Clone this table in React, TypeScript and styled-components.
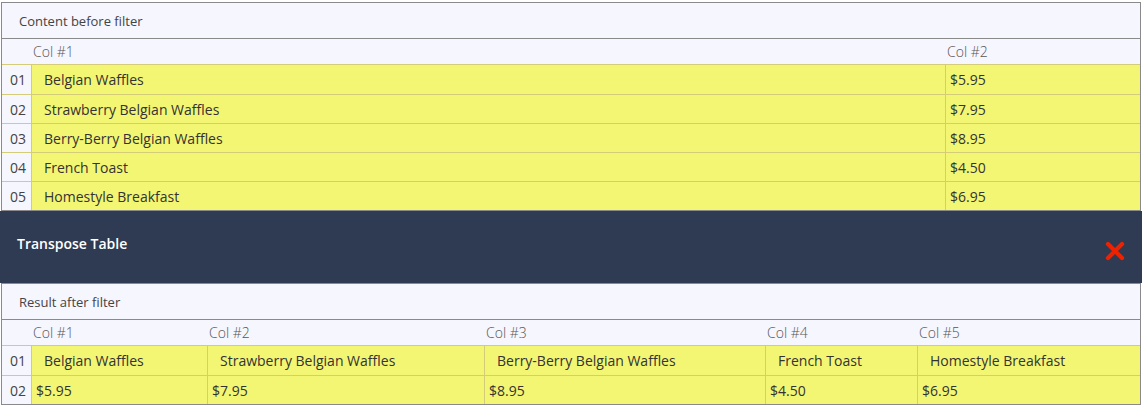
import React from "react";
import styled, { createGlobalStyle } from "styled-components";

const Global = createGlobalStyle`
  html, body { margin: 0; padding: 0; background: #ffffff; }
  body { font-family: "Open Sans", "Noto Sans", sans-serif; }
`;

const Page = styled.div`
  padding: 2px 1px 2px 1px;
  width: 1142px;
  box-sizing: border-box;
`;

const Panel = styled.section`
  border: 1px solid #8a8a8a;
  background: #f5f6fe;
`;

const Title = styled.div`
  height: 35px;
  display: flex;
  align-items: center;
  padding-left: 17px;
  font-size: 13px;
  color: #444;
  border-bottom: 1px solid #8a8a8a;
`;

const Grid = styled.div<{ $cols: string }>`
  display: grid;
  grid-template-columns: 30px ${(p) => p.$cols};
`;

const HeadCell = styled.div`
  height: 25px;
  display: flex;
  align-items: center;
  padding-left: 1px;
  font-size: 14px;
  font-weight: 300;
  color: #555;
  border-bottom: 1px solid #d4cc78;
`;

const NumCell = styled.div<{ $first?: boolean }>`
  height: 29px;
  box-sizing: border-box;
  display: flex;
  align-items: center;
  padding-left: 8px;
  font-size: 14px;
  color: #444;
  border-top: ${(p) => (p.$first ? "none" : "1px solid #d4cc78")};
  border-right: 1px solid #d4cc78;
`;

const Cell = styled.div<{ $pad: number; $first?: boolean; $last?: boolean }>`
  height: 29px;
  box-sizing: border-box;
  display: flex;
  align-items: center;
  padding-left: ${(p) => p.$pad}px;
  background: #f3f672;
  font-size: 14px;
  color: #333;
  white-space: nowrap;
  border-top: ${(p) => (p.$first ? "none" : "1px solid #d4cc78")};
  border-right: ${(p) => (p.$last ? "none" : "1px solid #d4cc78")};
`;

const Toolbar = styled.div`
  margin: 0 -1px;
  height: 72px;
  background: #2e3b52;
  display: flex;
  align-items: center;
  justify-content: space-between;
  padding: 0 16px 0 17px;
`;

const ToolTitle = styled.span`
  color: #fff;
  font-size: 14px;
  font-weight: 600;
  margin-top: -8px;
`;

const CloseBtn = styled.button`
  border: none;
  background: transparent;
  padding: 0;
  width: 22px;
  height: 22px;
  display: flex;
  align-items: center;
  justify-content: center;
  cursor: pointer;
  margin-top: 8px;
`;

const items = [
  ["Belgian Waffles", "$5.95"],
  ["Strawberry Belgian Waffles", "$7.95"],
  ["Berry-Berry Belgian Waffles", "$8.95"],
  ["French Toast", "$4.50"],
  ["Homestyle Breakfast", "$6.95"],
];

const pad2 = (n: number) => String(n).padStart(2, "0");

export default function App() {
  const transposed = [items.map((i) => i[0]), items.map((i) => i[1])];
  const botCols = "176px 277px 281px 152px 1fr";
  return (
    <>
      <Global />
      <Page>
        <Panel>
          <Title>Content before filter</Title>
          <Grid $cols="914px 1fr">
            <HeadCell />
            <HeadCell>Col #1</HeadCell>
            <HeadCell>Col #2</HeadCell>
            {items.map((row, r) => (
              <React.Fragment key={r}>
                <NumCell $first={r === 0}>{pad2(r + 1)}</NumCell>
                <Cell $pad={12} $first={r === 0}>{row[0]}</Cell>
                <Cell $pad={4} $first={r === 0} $last>{row[1]}</Cell>
              </React.Fragment>
            ))}
          </Grid>
        </Panel>
        <Toolbar>
          <ToolTitle>Transpose Table</ToolTitle>
          <CloseBtn aria-label="Close">
            <svg width="20" height="20" viewBox="0 0 20 20">
              <path d="M3 3 L17 17 M17 3 L3 17" stroke="#ee2200" strokeWidth="4.2" strokeLinecap="round" />
            </svg>
          </CloseBtn>
        </Toolbar>
        <Panel>
          <Title>Result after filter</Title>
          <Grid $cols={botCols}>
            <HeadCell />
            {items.map((_, c) => (
              <HeadCell key={c}>Col #{c + 1}</HeadCell>
            ))}
            {transposed.map((row, r) => (
              <React.Fragment key={r}>
                <NumCell $first={r === 0}>{pad2(r + 1)}</NumCell>
                {row.map((v, c) => (
                  <Cell key={c} $pad={r === 0 ? 12 : 4} $first={r === 0} $last={c === row.length - 1}>
                    {v}
                  </Cell>
                ))}
              </React.Fragment>
            ))}
          </Grid>
        </Panel>
      </Page>
    </>
  );
}
